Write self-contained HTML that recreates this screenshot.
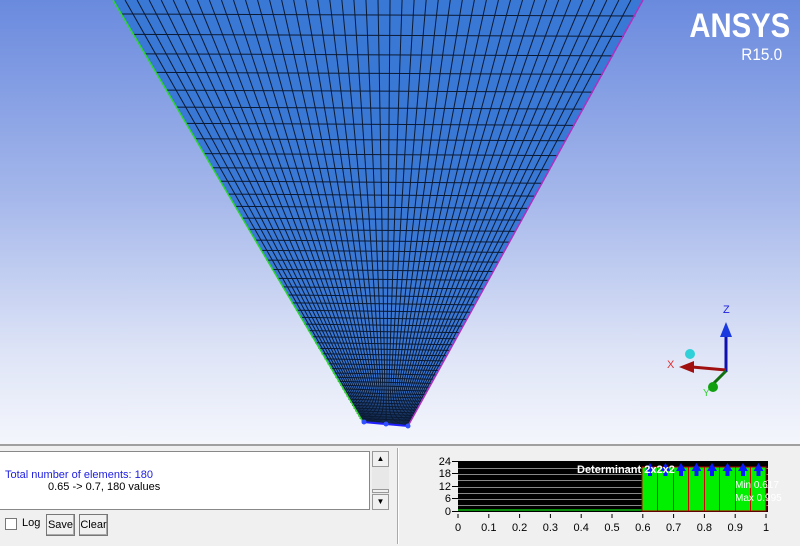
<!DOCTYPE html>
<html><head><meta charset="utf-8"><style>
*{margin:0;padding:0;box-sizing:border-box}
body{width:800px;height:546px;overflow:hidden;font-family:"Liberation Sans",Arial,sans-serif;background:#f0f0f0;position:relative}
#view{position:absolute;left:0;top:0;width:800px;height:444px;background:linear-gradient(#6a8ade 0%,#a6b8eb 45%,#dfe5f7 80%,#f4f6fc 100%)}
.logo{position:absolute;right:10px;top:6px;color:#fff;text-align:right}
.logo b{display:block;font-size:34px;font-weight:bold;line-height:40px;transform:scaleX(.86);transform-origin:right}
.logo span{display:block;font-size:17px;line-height:18px;margin-right:8px;transform:scaleX(.9);transform-origin:right}
#bot{position:absolute;left:0;top:444px;width:800px;height:102px;background:#f0f0f0;border-top:2px solid #a0a0a0}
.txt{position:absolute;left:0;top:5px;width:370px;height:59px;background:#fff;border:1px solid #888;border-left:none;font-size:11px}
.sb{position:absolute;left:372px;top:5px;width:17px;height:59px;background:#e8e8e8}
.sbb{position:absolute;left:0;width:17px;height:16px;background:#f0f0f0;border:1px solid #999;font-size:8px;text-align:center;line-height:14px}
.btn{position:absolute;top:68px;height:22px;border:1px solid #777;background:#f0f0f0;font-size:11px;line-height:20px;text-align:center;box-shadow:inset -1px -1px #aaa}
.sep{position:absolute;left:397px;top:2px;width:2px;height:96px;border-left:1px solid #aaa;border-right:1px solid #fff}
</style></head><body>
<div id="view">
<svg width="800" height="444" style="position:absolute;left:0;top:0">
<polygon points="113,0 643,0 408,426 363,422" fill="#3a78d6"/>
<g id="mesh" stroke="#0b1a33" stroke-width="1" fill="none"></g>
<line x1="113" y1="0" x2="363" y2="422" stroke="#2cd62c" stroke-width="1.5"/>
<line x1="643" y1="0" x2="408" y2="426" stroke="#b030c0" stroke-width="1.5"/>
<line x1="363" y1="422" x2="408" y2="426" stroke="#2020ff" stroke-width="2"/>
<circle cx="364" cy="422" r="2.5" fill="#3050ff"/><circle cx="386" cy="424" r="2.5" fill="#3050ff"/><circle cx="408" cy="426" r="2.5" fill="#3050ff"/>
<text x="723" y="313" font-size="11" fill="#2020e0" font-family="Liberation Sans">Z</text>
<line x1="726" y1="372" x2="726" y2="335" stroke="#1010b0" stroke-width="3"/>
<polygon points="726,322 720,337 732,337" fill="#1a3ae0"/>
<line x1="726" y1="370" x2="692" y2="367" stroke="#a01010" stroke-width="3"/>
<polygon points="679,367 694,361 694,373" fill="#a01010"/>
<text x="667" y="368" font-size="11" fill="#e03030" font-family="Liberation Sans">X</text>
<line x1="726" y1="371" x2="713" y2="384" stroke="#107010" stroke-width="3"/>
<circle cx="713" cy="387" r="5" fill="#10a010"/>
<text x="703" y="396" font-size="10" fill="#30d030" font-family="Liberation Sans">Y</text>
<circle cx="690" cy="354" r="5" fill="#30d0d8"/>
</svg>
<div class="logo"><b>ANSYS</b><span>R15.0</span></div>
</div>
<div id="bot">
<div class="txt">
<div style="position:absolute;left:5px;top:17px;color:#2020e0">Total number of elements: 180</div>
<div style="position:absolute;left:48px;top:29px;color:#000">0.65 -&gt; 0.7, 180 values</div>
</div>
<div class="sb"><div class="sbb" style="top:0">▲</div><div class="sbb" style="top:38px;height:4px;line-height:2px"></div><div class="sbb" style="top:43px">▼</div></div>
<div style="position:absolute;left:5px;top:72px;width:12px;height:12px;border:1px solid #777;background:#fff"></div>
<div style="position:absolute;left:22px;top:71px;font-size:11px">Log</div>
<div class="btn" style="left:46px;width:29px">Save</div>
<div class="btn" style="left:79px;width:29px">Clear</div>
<div class="sep"></div>
<svg width="400" height="100" style="position:absolute;left:400px;top:0" font-family="Liberation Sans" font-size="11">
<rect x="58" y="15" width="310" height="51" fill="#000"/>
<g stroke="#888" stroke-width="1">
<line x1="58" y1="22.5" x2="368" y2="22.5"/><line x1="58" y1="28.5" x2="368" y2="28.5"/><line x1="58" y1="34.5" x2="368" y2="34.5"/><line x1="58" y1="41.5" x2="368" y2="41.5"/><line x1="58" y1="47.5" x2="368" y2="47.5"/><line x1="58" y1="53.5" x2="368" y2="53.5"/><line x1="58" y1="59.5" x2="368" y2="59.5"/>
</g>
<rect x="58" y="63" width="184" height="2" fill="#0a8a0a"/>
<rect x="242" y="21" width="124" height="44" fill="#00f000" stroke="#c00000"/>
<g stroke="#d00000"><line x1="257.5" y1="21" x2="257.5" y2="65"/><line x1="273.5" y1="21" x2="273.5" y2="65"/><line x1="288.5" y1="21" x2="288.5" y2="65"/><line x1="304.5" y1="21" x2="304.5" y2="65"/><line x1="319.5" y1="21" x2="319.5" y2="65"/><line x1="335.5" y1="21" x2="335.5" y2="65"/><line x1="350.5" y1="21" x2="350.5" y2="65"/></g>
<g fill="#0a1aff" id="arr"></g>
<text x="177" y="27" fill="#fff" font-weight="bold">Determinant 2x2x2</text>
<text x="335" y="42" fill="#fff" font-size="10">Min 0.617</text>
<text x="335" y="55" fill="#fff" font-size="10">Max 0.995</text>
<g stroke="#000"><line x1="52" y1="15.5" x2="58" y2="15.5"/><line x1="52" y1="27.5" x2="58" y2="27.5"/><line x1="52" y1="40.5" x2="58" y2="40.5"/><line x1="52" y1="52.5" x2="58" y2="52.5"/><line x1="52" y1="65.5" x2="58" y2="65.5"/></g>
<g text-anchor="end" fill="#000"><text x="51" y="19">24</text><text x="51" y="31">18</text><text x="51" y="44">12</text><text x="51" y="56">6</text><text x="51" y="69">0</text></g>
<g id="xt" fill="#000" text-anchor="middle"></g>
</svg>
</div>
<script>
(function(){
var g=document.getElementById('mesh'),s='';
var N=44;
for(var i=1;i<N;i++){var t=i/N;var x0=113+530*t,x1=363+45*t,y1=422+4*t;s+='<line x1="'+x0+'" y1="0" x2="'+x1+'" y2="'+y1+'"/>';}
var y=14;
while(y<420){var f=y/424;var xl=113+250*f,xr=643-235*f;s+='<line x1="'+xl+'" y1="'+y+'" x2="'+xr+'" y2="'+(y+2)+'"/>';y+=Math.max(2.5,21-19*f);}
g.innerHTML=s;
var a=document.getElementById('arr'),h='';
for(var k=0;k<8;k++){var cx=250+k*15.5;h+='<polygon points="'+cx+',17 '+(cx-5)+',25 '+(cx-2)+',25 '+(cx-2)+',30 '+(cx+2)+',30 '+(cx+2)+',25 '+(cx+5)+',25"/>';}
a.innerHTML=h;
var xt=document.getElementById('xt'),q='';
var lab=['0','0.1','0.2','0.3','0.4','0.5','0.6','0.7','0.8','0.9','1'];
for(var j=0;j<=10;j++){var x=58+j*30.8;q+='<line x1="'+x+'" y1="68" x2="'+x+'" y2="72" stroke="#000"/><text x="'+x+'" y="85">'+lab[j]+'</text>';}
xt.innerHTML=q;
})();
</script>
</body></html>
